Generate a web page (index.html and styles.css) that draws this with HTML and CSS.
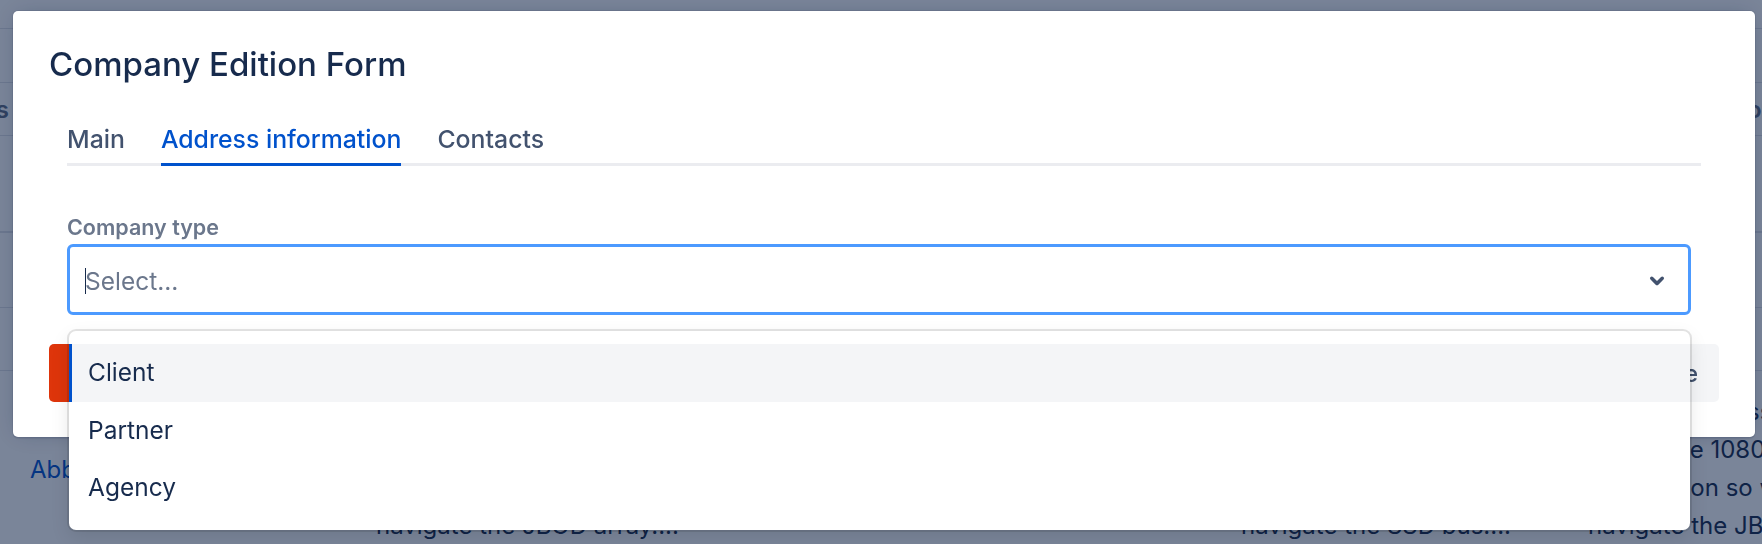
FILE: index.html
```html
<!doctype html>
<html>
<head>
<meta charset="utf-8">
<title>Company Edition Form</title>
<link rel="stylesheet" href="styles.css">
</head>
<body>
<div class="page">
	<div class="bg-row row-top"></div>
	<div class="bg-row row-head">
		<div class="head-cell-left"><span>Status</span></div>
		<div class="head-cell-right">Job</div>
	</div>
	<div class="bg-row row-a"></div>
	<div class="bg-row row-b"></div>
	<div class="bg-row row-c"></div>
	<div class="bg-row row-item">
		<div class="cell cell-name"><a href="#">Abbott Group</a></div>
		<div class="cell cell-desc">We need to program the back-end<br>capacitor, then we can reboot<br>the solid state application so we<br>navigate the JBOD array....</div>
		<div class="cell cell-desc">Try to parse the mobile<br>transmitter, maybe it will<br>bypass the wireless system to<br>navigate the SSD bus....</div>
		<div class="cell cell-desc">Try to compress the open<br>I'll use the 1080p driver<br>applicati on so we can<br>navigate the JBOD array....</div>
	</div>
</div>

<div class="blanket"></div>

<div class="modal">
	<h1 class="modal-title">Company Edition Form</h1>
	<div class="tabs">
		<div class="tab-list">
			<div class="tab">Main</div>
			<div class="tab active">Address information</div>
			<div class="tab">Contacts</div>
		</div>
		<div class="tab-panel">
			<label class="field-label">Company type</label>
			<div class="select">
				<div class="select-control">
					<div class="select-value"><span class="caret"></span><span class="placeholder">Select...</span></div>
					<div class="select-indicator">
						<svg width="42" height="42" viewBox="0 0 24 24"><path fill="#42526E" d="M8.292 10.293a1.009 1.009 0 0 0 0 1.419l2.939 2.965c.218.215.5.322.779.322s.556-.107.769-.322l2.93-2.955a1.01 1.01 0 0 0 0-1.419.987.987 0 0 0-1.406 0l-2.298 2.317-2.307-2.327a.99.99 0 0 0-1.406 0z"/></svg>
					</div>
				</div>
				<div class="select-menu">
					<div class="option focused">Client</div>
					<div class="option">Partner</div>
					<div class="option">Agency</div>
				</div>
			</div>
		</div>
	</div>
	<div class="modal-footer">
		<button class="btn btn-danger">Delete</button>
		<button class="btn btn-default">Close</button>
	</div>
</div>
</body>
</html>
```
FILE: styles.css
```css
*{margin:0; padding:0; box-sizing:border-box; list-style:none;}
html,body{height:100%;}
body{
	font-family: Inter, "Noto Sans", sans-serif;
	color: #172B4D;
	background: #fff;
	overflow: hidden;
}

/* page behind the dialog */
.page{
	padding-top: 28px;
	font-size: 24px;
}
.bg-row{
	border-top: 1px solid #DFE1E6;
}
.row-top{height: 54px;}
.row-head{
	height: 53px;
	display: flex;
	align-items: center;
	font-weight: 600;
	color: #5E6C84;
}
.head-cell-left{
	width: 9px;
	display: flex;
	justify-content: flex-end;
	white-space: nowrap;
}
.head-cell-right{
	margin-left: auto;
	width: 29px;
	white-space: nowrap;
}
.row-a{height: 96px;}
.row-b{height: 76px; border-top-width: 2px;}
.row-c{height: 63px;}
.row-item{
	display: grid;
	grid-template-columns: 376px 865px 347px 1fr;
	padding-top: 22px;
	line-height: 38px;
	white-space: nowrap;
}
.cell-name{
	padding: 58px 0 0 30px;
}
.cell-name a{
	color: #0052CC;
	text-decoration: none;
}

.blanket{
	position: fixed;
	top: 0; right: 0; bottom: 0; left: 0;
	background: rgba(9,30,66,0.54);
}

/* dialog */
.modal{
	position: absolute;
	top: 11px;
	left: 13px;
	width: 1742px;
	background: #fff;
	border-radius: 5px;
	padding: 33px 36px 35px;
	box-shadow: 0 0 0 1px rgba(9,30,66,0.08), 0 2px 1px rgba(9,30,66,0.08), 0 0 20px -6px rgba(9,30,66,0.31);
}
.modal-title{
	font-size: 33px;
	font-weight: 500;
	line-height: 40px;
	color: #172B4D;
}

.tabs{
	margin: 37px 18px 0;
}
.tab-list{
	display: flex;
	gap: 36px;
	box-shadow: inset 0 -3px 0 #EBECF0;
}
.tab{
	font-size: 24.8px;
	font-weight: 500;
	line-height: 36px;
	padding-bottom: 9px;
	color: #42526E;
}
.tab.active{
	color: #0052CC;
	box-shadow: inset 0 -3px 0 #0052CC;
}
.tab-panel{
	padding: 49px 10px 0 0;
}
.field-label{
	display: block;
	font-size: 21.5px;
	font-weight: 600;
	line-height: 24px;
	color: #6B778C;
	margin-bottom: 5px;
}

.select{
	position: relative;
}
.select-control{
	display: flex;
	align-items: center;
	height: 71px;
	border: 3px solid #4C9AFF;
	border-radius: 6px;
	padding-left: 15px;
}
.select-value{
	flex: 1;
	display: flex;
	align-items: center;
	font-size: 24.5px;
	line-height: 30px;
	padding-top: 2px;
}
.caret{
	display: inline-block;
	width: 1px;
	height: 26px;
	background: #172B4D;
	margin-right: -1px;
}
.placeholder{
	color: #6B778C;
}
.select-indicator{
	display: flex;
	padding-right: 10px;
}
.select-menu{
	position: absolute;
	top: calc(100% + 16px);
	left: 2px;
	right: 1px;
	background: #fff;
	border-radius: 7px;
	padding: 13px 0;
	box-shadow: 0 0 0 2px rgba(0,0,0,0.1), 0 7px 19px rgba(0,0,0,0.1);
	z-index: 2;
}
.option{
	font-size: 24.5px;
	line-height: 35.7px;
	padding: 11px 19px;
	color: #172B4D;
}
.option.focused{
	background: #F4F5F7;
	box-shadow: inset 3px 0 0 #0052CC;
}

.modal-footer{
	display: flex;
	justify-content: space-between;
	margin-top: 29px;
}
.btn{
	height: 58px;
	border: 0;
	border-radius: 5px;
	padding: 0 21px;
	font-family: Inter, "Noto Sans", sans-serif;
	font-size: 24px;
	font-weight: 500;
}
.btn-danger{
	background: #DE350B;
	color: #fff;
}
.btn-default{
	background: #F4F5F7;
	color: #42526E;
}
```
